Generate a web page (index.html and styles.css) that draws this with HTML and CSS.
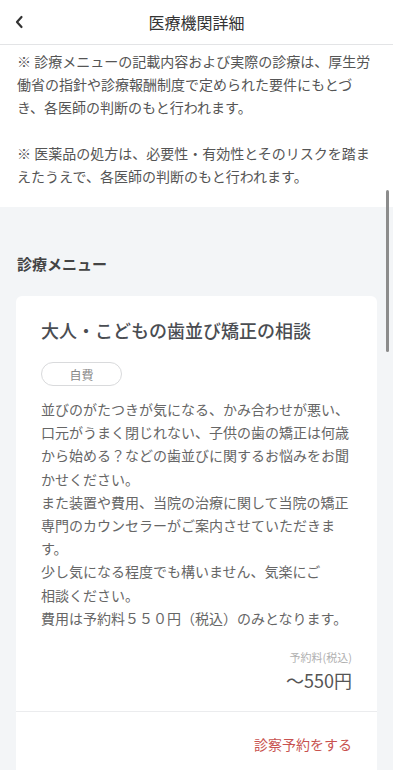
FILE: index.html
```html
<!DOCTYPE html>
<html lang="ja">
<head>
<meta charset="utf-8">
<title>医療機関詳細</title>
<link rel="stylesheet" href="styles.css">
</head>
<body>
<div class="app">
  <header class="header">
    <span class="back">
      <svg width="10" height="14" viewBox="0 0 10 14"><path d="M7.5 2 L3 7 L7.5 12" fill="none" stroke="#333" stroke-width="2.2" stroke-linecap="round" stroke-linejoin="round"/></svg>
    </span>
    <h1 class="title">医療機関詳細</h1>
    <span class="spacer"></span>
  </header>
  <section class="notes">
    <p>※ 診療メニューの記載内容および実際の診療は、厚生労働省の指針や診療報酬制度で定められた要件にもとづき、各医師の判断のもと行われます。</p>
    <p>※ 医薬品の処方は、必要性・有効性とそのリスクを踏まえたうえで、各医師の判断のもと行われます。</p>
  </section>
  <section class="menu">
    <h2 class="menu-heading">診療メニュー</h2>
    <div class="card">
      <div class="card-body">
        <h3 class="card-title">大人・こどもの歯並び矯正の相談</h3>
        <span class="badge">自費</span>
        <p class="desc">並びのがたつきが気になる、かみ合わせが悪い、口元がうまく閉じれない、子供の歯の矯正は何歳から始める？などの歯並びに関するお悩みをお聞かせください。<br>また装置や費用、当院の治療に関して当院の矯正専門のカウンセラーがご案内させていただきます。<br>少し気になる程度でも構いません、気楽にご<br>相談ください。<br>費用は予約料５５０円（税込）のみとなります。</p>
        <div class="price">
          <span class="price-label">予約料(税込)</span>
          <span class="price-value">〜550円</span>
        </div>
      </div>
      <div class="card-foot">
        <a class="reserve">診察予約をする</a>
      </div>
    </div>
  </section>
  <div class="scrollbar"></div>
</div>
</body>
</html>
```
FILE: styles.css
```css
* { box-sizing: border-box; }
html, body {
  margin: 0;
  padding: 0;
}
body {
  font-family: "Noto Sans CJK JP", "Noto Sans", "Liberation Sans", sans-serif;
  background: #f3f5f7;
  color: #555;
}
.app {
  position: relative;
  width: 393px;
  height: 770px;
  overflow: hidden;
  background: #f3f5f7;
}
.header {
  height: 45px;
  display: flex;
  align-items: center;
  justify-content: space-between;
  padding: 0 14px;
  background: #fff;
  border-bottom: 1px solid #e3e4e6;
}
.back {
  width: 24px;
  display: flex;
  align-items: center;
}
.spacer { width: 24px; }
.title {
  margin: 0;
  font-size: 16px;
  font-weight: 400;
  color: #333;
  letter-spacing: 0;
}
.notes {
  background: #fff;
  padding: 5px 17px 19px 17px;
}
.notes p {
  margin: 0;
  font-size: 14px;
  line-height: 23px;
  color: #555;
}
.notes p + p {
  margin-top: 23px;
}
.menu {
  padding: 45px 16px 0 16px;
}
.menu-heading {
  margin: 0 0 20px 1px;
  font-size: 15px;
  line-height: 24px;
  font-weight: 700;
  color: #444;
}
.card {
  background: #fff;
  border-radius: 6px;
}
.card-body {
  padding: 21px 25px 19px 25px;
  display: flex;
  flex-direction: column;
  align-items: flex-start;
  border-bottom: 1px solid #ebecee;
}
.card-title {
  margin: 0;
  font-size: 18px;
  line-height: 26px;
  font-weight: 500;
  color: #4a4d52;
}
.badge {
  margin-top: 19px;
  width: 81px;
  height: 24px;
  border: 1px solid #d9dadc;
  border-radius: 12px;
  display: flex;
  align-items: center;
  justify-content: center;
  font-size: 12px;
  color: #888;
}
.desc {
  margin: 12px 0 0 0;
  font-size: 14px;
  line-height: 23.2px;
  color: #666;
}
.price {
  align-self: stretch;
  margin-top: 19px;
  display: flex;
  flex-direction: column;
  align-items: flex-end;
}
.price-label {
  font-size: 11px;
  line-height: 16px;
  color: #b0b0b0;
}
.price-value {
  margin-top: 3px;
  font-size: 18px;
  line-height: 24px;
  color: #555;
}
.card-foot {
  padding: 22px 25px 30px 25px;
  display: flex;
  justify-content: flex-end;
}
.reserve {
  font-size: 14px;
  line-height: 20px;
  color: #c8524f;
}
.scrollbar {
  position: absolute;
  left: 386px;
  top: 190px;
  width: 3px;
  height: 162px;
  border-radius: 2px;
  background: #8c8c8c;
}
```
